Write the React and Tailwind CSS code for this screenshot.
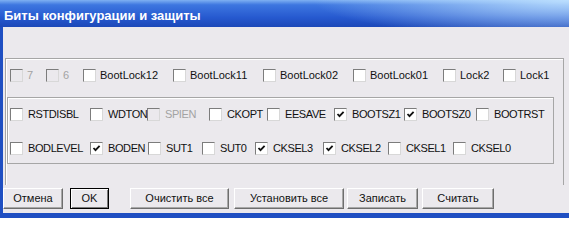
import React from 'react';

const lockBits = [
  { label: '7', w: 'w-[36px]', disabled: true },
  { label: '6', w: 'w-[37px]', disabled: true },
  { label: 'BootLock12', w: 'w-[90px]' },
  { label: 'BootLock11', w: 'w-[90px]' },
  { label: 'BootLock02', w: 'w-[90px]' },
  { label: 'BootLock01', w: 'w-[90px]' },
  { label: 'Lock2', w: 'w-[60px]' },
  { label: 'Lock1', w: 'w-[50px]' },
];

const fuseRows = [
  [
    { label: 'RSTDISBL', w: 'w-[80px]' },
    { label: 'WDTON', w: 'w-[57px]' },
    { label: 'SPIEN', w: 'w-[62px]', disabled: true },
    { label: 'CKOPT', w: 'w-[58px]' },
    { label: 'EESAVE', w: 'w-[67px]' },
    { label: 'BOOTSZ1', w: 'w-[70px]', checked: true },
    { label: 'BOOTSZ0', w: 'w-[72px]', checked: true },
    { label: 'BOOTRST', w: 'w-[70px]' },
  ],
  [
    { label: 'BODLEVEL', w: 'w-[80px]' },
    { label: 'BODEN', w: 'w-[58px]', checked: true },
    { label: 'SUT1', w: 'w-[54px]' },
    { label: 'SUT0', w: 'w-[53px]' },
    { label: 'CKSEL3', w: 'w-[68px]', checked: true },
    { label: 'CKSEL2', w: 'w-[65px]', checked: true },
    { label: 'CKSEL1', w: 'w-[65px]' },
    { label: 'CKSEL0', w: 'w-[60px]' },
  ],
];

const buttons = [
  { label: 'Отмена', cls: 'ml-0 w-[60px]' },
  { label: 'OK', cls: 'ml-[7px] w-[39px]', primary: true },
  { label: 'Очистить все', cls: 'ml-[21px] w-[99px]' },
  { label: 'Установить все', cls: 'ml-[5px] w-[110px]' },
  { label: 'Записать', cls: 'ml-[3px] w-[71px]' },
  { label: 'Считать', cls: 'ml-[4px] w-[72px]' },
];

const Box = ({ checked, disabled }) => (
  <span
    className={`relative block w-[13px] h-[13px] shrink-0 border border-t-[#7c7c7c] border-l-[#7c7c7c] border-b-[#d8d8d8] border-r-[#d8d8d8] ${
      disabled ? 'bg-[#ebe9ed]' : 'bg-white'
    }`}
  >
    {checked && (
      <svg className="absolute inset-0" width="11" height="11" viewBox="0 0 11 11">
        <path d="M2.5 5 L4.5 7.2 L8.6 2.8" fill="none" stroke="#111" strokeWidth="1.8" />
      </svg>
    )}
  </span>
);

const Check = ({ label, w, checked, disabled, gap }) => (
  <div className={`flex items-center shrink-0 overflow-hidden ${w}`}>
    <Box checked={checked} disabled={disabled} />
    <span
      className={`${gap} whitespace-nowrap text-[11px] leading-[13px] ${
        disabled ? 'text-[#a3a3a3]' : 'text-[#111]'
      }`}
    >
      {label}
    </span>
  </div>
);

export default function App() {
  return (
    <div className="w-[569px] h-[218px] overflow-hidden flex flex-col bg-[#ebe9ed] font-['Liberation_Sans',Arial,sans-serif]">
      <div className="h-[27px] shrink-0 pl-[4px] pt-[8px] text-white font-bold text-[13px] leading-[15px] bg-[radial-gradient(45%_140%_at_100%_0%,rgba(190,225,255,0.95),rgba(190,225,255,0)),linear-gradient(180deg,#7eb0f2_0%,#3d76e0_18%,#2659cf_65%,#1c48b8_100%)]">
        Биты конфигурации и защиты
      </div>

      <div className="flex-1 flex flex-col border-l-[3px] border-b-[5px] border-[#1f4fc2]">
        <div className="mt-[31px] ml-[2px] w-[559px] pb-[21px] border-t border-l border-r border-[#a6a6a6] shadow-[inset_1px_1px_0_#fff]">
          <div className="flex items-center pt-[10px] pl-[4px]">
            {lockBits.map((b) => (
              <Check key={b.label} {...b} gap="ml-[4px]" />
            ))}
          </div>

          <div className="mt-[15px] ml-[1px] w-[547px] pt-[10px] pb-[8px] pl-[2px] flex flex-col gap-[21px] border border-[#a6a6a6] shadow-[inset_1px_1px_0_#fff]">
            {fuseRows.map((row, i) => (
              <div key={i} className="flex items-center">
                {row.map((b) => (
                  <Check key={b.label} {...b} gap="ml-[5px] tracking-[-0.4px]" />
                ))}
              </div>
            ))}
          </div>
        </div>

        <div className="mt-[3px] flex items-center">
          {buttons.map((b) => (
            <button
              key={b.label}
              className={`${b.cls} h-[21px] flex items-center justify-center text-[11px] text-[#111] bg-[#ebe9ed] ${
                b.primary
                  ? 'border border-black shadow-[inset_1px_1px_0_#fff,inset_-1px_-1px_0_#7a7a7a]'
                  : 'border border-t-white border-l-white border-b-[#6e6e6e] border-r-[#6e6e6e] shadow-[inset_-1px_-1px_0_#a8a8a8]'
              }`}
            >
              {b.label}
            </button>
          ))}
        </div>
      </div>
    </div>
  );
}
